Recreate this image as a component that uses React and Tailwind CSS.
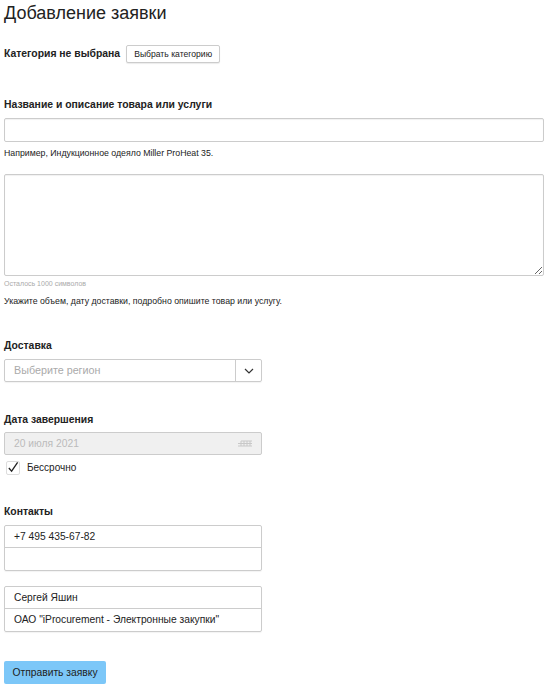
import React from "react";

function Label({ children, className = "" }) {
  return <div className={`text-[10.4px] leading-[14px] font-bold text-[#222] ${className}`}>{children}</div>;
}

export default function App() {
  return (
    <div className="min-h-screen bg-white px-[4px] pt-[1px] pb-[3px] [font-family:'Liberation_Sans',Arial,sans-serif] text-[#222]">
      <h1 className="text-[18px] leading-[24px] font-normal">Добавление заявки</h1>

      <div className="mt-[20px] flex items-center gap-[6px]">
        <Label>Категория не выбрана</Label>
        <button className="h-[18px] w-[94px] rounded-[2px] border border-[#ccc] bg-white text-[8.6px] leading-none shadow-[0_1px_1px_rgba(0,0,0,0.08)]">
          Выбрать категорию
        </button>
      </div>

      <Label className="mt-[35px]">Название и описание товара или услуги</Label>
      <input
        type="text"
        className="mt-[6px] block h-[24px] w-[540px] rounded-[2px] border border-[#ccc] shadow-[inset_0_1px_1px_rgba(0,0,0,0.06)] outline-none"
      />
      <div className="mt-[5px] text-[8.75px] leading-[12px]">Например, Индукционное одеяло Miller ProHeat 35.</div>

      <textarea className="mt-[15px] block h-[102px] w-[540px] resize-y rounded-[2px] border border-[#ccc] shadow-[inset_0_1px_1px_rgba(0,0,0,0.06)] outline-none" />
      <div className="mt-[3px] text-[7px] leading-[10px] text-[#aaa]">Осталось 1000 символов</div>
      <div className="mt-[6px] text-[8.75px] leading-[12px]">Укажите объем, дату доставки, подробно опишите товар или услугу.</div>

      <Label className="mt-[32px]">Доставка</Label>
      <div className="mt-[6px] flex h-[23px] w-[258px] items-stretch rounded-[2px] border border-[#ccc] shadow-[0_1px_1px_rgba(0,0,0,0.05)]">
        <div className="flex flex-1 items-center pl-[9px] text-[10.75px] text-[#aaa]">Выберите регион</div>
        <div className="flex w-[26px] items-center justify-center border-l border-[#ccc]">
          <svg width="10" height="6" viewBox="0 0 10 6" fill="none">
            <path d="M1 1l4 4 4-4" stroke="#333" strokeWidth="1.2" />
          </svg>
        </div>
      </div>

      <Label className="mt-[31px]">Дата завершения</Label>
      <div className="mt-[5px] flex h-[23px] w-[258px] items-center justify-between rounded-[2px] border border-[#ccc] bg-[#f0f0f0] pl-[9px] pr-[8px]">
        <span className="text-[10.3px] text-[#bbb]">20 июля 2021</span>
        <svg width="16" height="7" viewBox="0 0 16 7" fill="none">
          <path d="M4 1h11M1 3.5h14M1 6h14M4 1v5M7 1v5M10 1v5M13 1v5" stroke="#c8c8c8" strokeWidth="1" />
        </svg>
      </div>
      <div className="mt-[5px] flex items-center gap-[7px]">
        <div className="ml-[2px] flex h-[14px] w-[14px] items-center justify-center rounded-[2px] border border-[#ddd]">
          <svg width="13" height="13" viewBox="0 0 13 13" fill="none">
            <path d="M2 7l3 3.5L11.5 1" stroke="#222" strokeWidth="1.4" />
          </svg>
        </div>
        <span className="text-[10px]">Бессрочно</span>
      </div>

      <Label className="mt-[30px]">Контакты</Label>
      <div className="mt-[6px] w-[258px] rounded-[2px] border border-[#ccc] shadow-[0_1px_1px_rgba(0,0,0,0.05)]">
        <div className="flex h-[22px] items-center border-b border-[#ccc] pl-[9px] text-[10.25px]">+7 495 435-67-82</div>
        <div className="h-[22px]" />
      </div>
      <div className="mt-[15px] w-[258px] rounded-[2px] border border-[#ccc] shadow-[0_1px_1px_rgba(0,0,0,0.05)]">
        <div className="flex h-[22px] items-center border-b border-[#ccc] pl-[9px] text-[10.25px]">Сергей Яшин</div>
        <div className="flex h-[22px] items-center pl-[9px] text-[10.25px]">ОАО "iProcurement - Электронные закупки"</div>
      </div>

      <button className="mt-[29px] h-[23px] w-[102px] rounded-[2px] bg-[#7cc7f8] text-[10.3px] text-[#222]">Отправить заявку</button>
    </div>
  );
}
